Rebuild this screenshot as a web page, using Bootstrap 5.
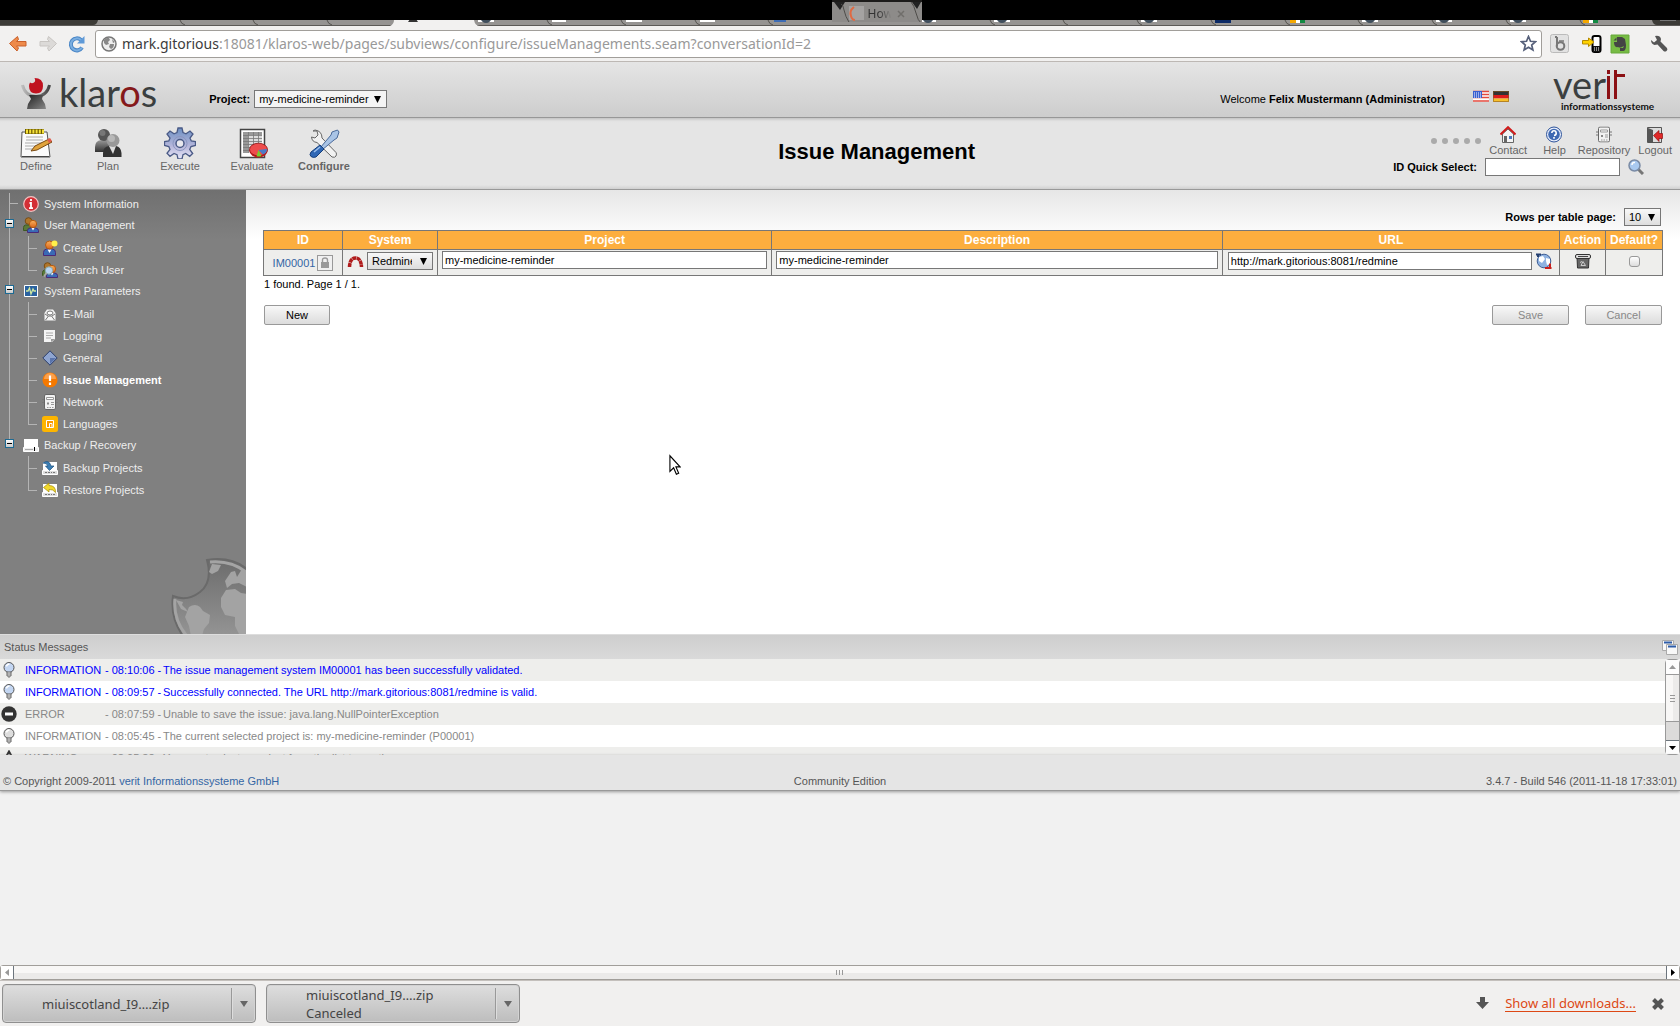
<!DOCTYPE html>
<html lang="en">
<head>
<meta charset="utf-8">
<meta name="viewport" content="width=device-width, initial-scale=1">
<title>Issue Management - Klaros</title>
<link href="https://cdn.jsdelivr.net/npm/bootstrap@5.3.0/dist/css/bootstrap.min.css" rel="stylesheet">
<script src="https://cdn.jsdelivr.net/npm/bootstrap@5.3.0/dist/js/bootstrap.bundle.min.js"></script>
<style>
body{font-family:"Liberation Sans",Arial,sans-serif;font-size:11px;line-height:14px;color:#000;background:#f1f1f1;min-height:100vh;overflow:hidden}
svg{display:block;flex:none}
a{text-decoration:none;color:#3465a4}
.ui-font{font-family:"Noto Sans","Open Sans",sans-serif}
/* browser chrome */
.tabstrip{height:26px;background:#8f8d8b}
.tabstrip>svg{width:100%;height:26px}
.drag-tab{position:absolute;left:49.5%;top:0;width:90px;height:22px}
.drag-tab svg{width:90px;height:22px}
.drag-label{position:absolute;left:36px;top:6px;font-size:12px;line-height:16px;color:#333;width:26px;-webkit-mask-image:linear-gradient(90deg,#000 40%,transparent 90%)}
.navrow{height:36px;background:#f2f1f0;border-bottom:1px solid #bdb8b4;padding-right:12px}
.nav-ico{width:87px;padding-left:8px;gap:10px}
.icon-btn{border:0;background:none;padding:0;display:block}
.omni{height:28px;background:#fff;border:1px solid #a19e9a;border-radius:3px;margin-left:8px;padding:0 4px 0 5px}
.omni-text{font-size:14px;line-height:20px;color:#999;margin-left:5px}
.omni-text b{font-weight:400;color:#3c3c3c}
/* header */
.brandbar{height:56px;background:linear-gradient(#e5e5e5,#cdcdcd);border-bottom:1px solid #979797}
.brand-link{margin-left:21px}
.logo-word{font-family:Lato,sans-serif;font-size:38px;line-height:40px;color:#3b3f40;margin:10px 0 0 8px}
.logo-word span{color:#85191b}
.proj-pick{margin-left:52px;gap:4px}
.welcome{margin-top:30px}
.flags{gap:4px;margin:27px 44px 0 28px}
.verit{color:#3b3f40;width:127px;padding-top:5px}
.verit-name{font-family:Lato,sans-serif;font-size:38px;line-height:34px}
.verit-name svg{margin-top:3px}
.verit-sub{font-family:Lato,sans-serif;font-size:10px;line-height:10px;color:#111;font-weight:700;margin-left:8px}
.menubar{height:72px;background:linear-gradient(#c4c4c4,#e2e2e2 3px,#e5e5e5 5px,#e5e5e5 67px,#d0d0d0);border-bottom:1px solid #999;box-shadow:0 1px #d8d8d8}
.main-menu{padding-top:9px}
.menu-link{width:72px;color:#666;text-align:center}
.page-title{font-size:22px;line-height:26px;font-weight:700;margin:0;padding-top:21px}
.side-cell{flex:1 1 0}
.mini-link{color:#666;line-height:14px;text-align:center}
.dotrow{gap:5px;padding-top:12px}
.dotrow i{width:6px;height:6px;border-radius:50%;background:#aaa}
.quick-row{margin-right:20px;padding-top:1px}
.quick-box{width:135px}
.sel{appearance:none;border:1px solid #777;color:#000;font-size:11px;line-height:14px;height:18px;padding:0 4px;border-radius:0;background:#f4f4f4 url("data:image/svg+xml,%3Csvg xmlns='http://www.w3.org/2000/svg' width='8' height='8'%3E%3Cpath d='M0 0h8L4 8z'/%3E%3C/svg%3E") no-repeat right 5px center/7px 7px}
.sel-grad{background-image:url("data:image/svg+xml,%3Csvg xmlns='http://www.w3.org/2000/svg' width='8' height='8'%3E%3Cpath d='M0 0h8L4 8z'/%3E%3C/svg%3E"),linear-gradient(#f8f8f8,#ddd);background-size:7px 7px,auto;background-position:right 5px center,0 0;background-repeat:no-repeat,repeat}
.sel-project{width:133px}
.sel-system{width:66px;padding-right:20px}
.sel-rows{width:37px;margin-right:2px}
.txt{border:1px solid #777;background:#fff;height:18px;padding:0 2px;font-size:11px;line-height:14px;min-width:0;color:#000;border-radius:0}
/* sidebar */
.sidebar{width:246px;background:linear-gradient(#707070,#808080 50px);overflow:hidden;padding-top:3px}
.tree-top{height:21px;padding-left:23px}
.tree-top a{margin-left:5px}
.tree a{color:#eee}
.tree-kids{padding-top:2px;margin-bottom:-1px}
.tree-kid{height:22px;padding-left:42px;position:relative}
.tree-kid a{margin-left:5px}
.tree-kid::before{content:"";position:absolute;left:28px;top:-1px;width:9px;height:13px;border-left:1px solid #b4b4b4;border-bottom:1px solid #b4b4b4}
.tree-kid:not(:last-child)::after{content:"";position:absolute;left:28px;top:11px;height:11px;border-left:1px solid #b4b4b4}
.trunk{position:absolute;left:9px;top:0;height:246px;border-left:1px solid #b4b4b4}
.stub::before{content:"";position:absolute;left:9px;top:10px;width:9px;border-top:1px solid #b4b4b4}
.toggler{position:absolute;left:5px;top:5px;width:9px;height:9px;padding:0;border:1px solid #1d6a93;background:linear-gradient(#fff,#c8c8c8)}
.toggler::after{content:"";position:absolute;left:1px;top:3px;width:5px;height:1px;background:#000}
.globe{position:absolute;right:0;bottom:0}
.workarea{min-height:444px}
.content-pane{background:linear-gradient(#e6e6e6,#fff 50px);padding:18px 17px 0}
/* table */
.grid-table{table-layout:fixed;width:100%;border-collapse:collapse;margin-top:4px}
.grid-table th{background:#fcae3e;color:#fff;font-size:12px;line-height:14px;height:19px;text-align:center;padding:0;border:1px solid #777}
.grid-table td{background:#eeeeec;border:1px solid #777;height:26px;padding:1px 4px 0;vertical-align:top}
.grid-table .cell-id{padding-top:5px}
.cell-id>div{gap:2px}
.grid-table .cell-low{padding-top:2px}
.grid-table .cell-act{padding-top:3px}
.grid-table .cell-tick{padding-top:6px}
.url-wrap{padding:0 3px 0 1px;gap:4px}
.lockbox{width:16px;height:16px;border:1px solid #999;background:#f0f0f0;padding:1px 3px}
.tick{appearance:none;width:11px;height:11px;border:1px solid #999;border-radius:3px;background:linear-gradient(#fff,#ddd);margin:0}
.found{padding:1px 1px 0;height:29px}
.btn-row{padding:0 1px}
.push{border:1px solid #999;border-radius:2px;background:linear-gradient(#f8f8f8,#dcdcdc);height:20px;line-height:16px;font-size:11px;padding:0;width:77px;color:#000}
.push:disabled{color:#888}
.push-new{width:66px}
/* status */
.status-head{height:25px;background:linear-gradient(#cecece,#dadada);border-top:1px solid #ddd;color:#555;padding:0 2px 0 4px}
.status-box{height:96px;overflow:hidden}
.status-row{height:22px;background:#eeeeec;color:#888;padding-left:1px}
.status-row:nth-child(even){background:#fff}
.status-row.fresh{color:#00f}
.lvl{width:80px;margin-left:8px}
.stamp{width:58px}
.vscroll{width:15px;background:#dcdbda;border:1px solid #999;border-radius:4px}
.vs-btn{height:14px;background:#fdfdfd}
.vs-thumb{height:48px;background:linear-gradient(90deg,#f8f7f6 50%,#ecebea 50%);border:solid #999;border-width:1px 0}
.footer-row{height:36px;background:#e5e5e5;border-bottom:1px solid #999;box-shadow:0 1px 3px #999;color:#555;padding:19px 3px 0;position:relative}
.hscroll{height:15px;border:1px solid #a19e9a;background:linear-gradient(#f8f7f6 50%,#ebeae9 50%);border-radius:3px}
.hs-btn{width:13px;background:#fff}
.dlbar{height:46px;background:#f1f0ef;border-top:1px solid #c4c0bc;padding:3px 16px 0 2px;gap:10px}
.dl-item{width:254px;height:39px;border:1px solid #8f8f8f;border-radius:4px;background:linear-gradient(#dedede,#bdbdbd);color:#444;font-size:13px;line-height:18px;padding:0;box-shadow:inset 0 0 0 1px #d2d2d2}
.dl-name{padding-left:39px}
.dl-arrow{width:24px;height:31px;border-left:1px solid #999;box-shadow:inset 1px 0 #ddd}
.dl-tools{height:39px}
.dl-all{font-size:13px;color:#dd4814;border-bottom:1px solid #dd4814;line-height:16px}
.pointer{position:absolute;left:669px;top:454px}
</style>
</head>
<body class="d-flex flex-column position-relative">

<svg width="0" height="0" class="position-absolute" aria-hidden="true">
<defs>
<linearGradient id="gGlobe" x1="0" y1="0" x2="0" y2="1"><stop offset="0" stop-color="#6c6c6c"/><stop offset="1" stop-color="#949494"/></linearGradient>
<linearGradient id="gBlue" x1="0" y1="0" x2="0" y2="1"><stop offset="0" stop-color="#6c8fc2"/><stop offset=".6" stop-color="#b8b8dc"/><stop offset="1" stop-color="#e8e8f8"/></linearGradient>
<linearGradient id="gDark" x1="0" y1="0" x2="0" y2="1"><stop offset="0" stop-color="#999"/><stop offset="1" stop-color="#333"/></linearGradient>
<linearGradient id="gOrange" x1="0" y1="0" x2="0" y2="1"><stop offset="0" stop-color="#f9b15c"/><stop offset="1" stop-color="#d9641c"/></linearGradient>
<linearGradient id="gBody" x1="0" y1="0" x2="1" y2="1"><stop offset="0" stop-color="#222"/><stop offset="1" stop-color="#888"/></linearGradient>
<linearGradient id="gArm" x1="0" y1="0" x2="1" y2="0"><stop offset="0" stop-color="#bbb"/><stop offset="1" stop-color="#444"/></linearGradient>
<symbol id="bulb" viewBox="0 0 16 16"><circle cx="8" cy="5.500" r="5" fill="currentColor" stroke="#555"/><path d="M5.500 4.500Q5.800 2.300 8.500 2" stroke="#fff" stroke-width="1.500" fill="none"/><path d="M6 10h4v4H6z" fill="#eee" stroke="#666"/><path d="M6 12h4M7 15h2" stroke="#777"/></symbol>
<symbol id="person" viewBox="0 0 16 16"><path d="M1.500 15.500v-3q0-3 3-3.500h6q3 .500 3 3.500v3z" fill="#3a6ab5" stroke="#4b2a78"/><path d="M5.500 9.500L7.500 13l2-3.500z" fill="#fff"/><circle cx="7.500" cy="5" r="4" fill="url(#gOrange)" stroke="#b35a10"/></symbol>
<symbol id="people" viewBox="0 0 16 16"><path d="M.5 13.500v-3q0-2 2-2.500h5v5.500z" fill="#5b7a3a" stroke="#3e5a22"/><circle cx="5.500" cy="4" r="3.300" fill="#b0762c" stroke="#7a4c12"/><path d="M4.500 15.500v-2q0-2 2.500-2.500h5.500q3 .500 3 2.500v2z" fill="#3a6ab5" stroke="#4b2a78"/><path d="M8.500 11L10 13.500l1.500-2.500z" fill="#fff"/><circle cx="10" cy="7" r="3.700" fill="url(#gOrange)" stroke="#b35a10"/></symbol>
<symbol id="disk" viewBox="0 0 16 16"><path d="M1 2h14v8H1z" fill="#fff"/><path d="M.5 10.500h15v4H.5z" fill="#ddd" stroke="#fff"/><path d="M3 12.500h2m1 0h2m1 0h1m1 0h2" stroke="#777"/></symbol>
<symbol id="rack" viewBox="0 0 16 16"><path d="M0 5.500h2M14 5.500h2M0 8.500h2M14 8.500h2" stroke="#777"/><rect x="2.500" y=".5" width="11" height="15" rx="1.500" fill="#f2f2f2" stroke="#666"/><path d="M4.500 3.500h7v2h-7z" fill="#fff" stroke="#999"/><path d="M5 8.500h2v2H5z" fill="#888"/><path d="M9 8.500h3M9 10.500h3M5 13.500h1.500M7.500 13.500H9M10 13.500h1.500" fill="none" stroke="#999"/></symbol>
<symbol id="fav" viewBox="0 0 16 5"><path d="M0 0h16v4H0z" fill="#fff"/><path d="M2 0h12q-2 5-6 5T2 0z" fill="#3f4e5c"/></symbol>
</defs>
</svg>

<!-- tab strip -->
<div class="tabstrip position-relative">
<svg viewBox="0 0 1680 26" preserveAspectRatio="none">
<path d="M0 20h1680v6H0z" fill="#969492"/>
<path d="M0 20h98q-1 5-5 5H0z" fill="#3c3b37"/>
<path d="M0 25.500h1680" stroke="#5c5a57"/>
<path d="M390 26q4-2 4-6h80q1 6 6 6z" fill="#f2f1f0"/>
<path d="M180 20q1 4 5 5M253 20q1 4 5 5M327 20q1 4 5 5M547 20q1 4 5 5M621 20q1 4 5 5M695 20q1 4 5 5M768 20q1 4 5 5M990 20q1 4 5 5M1063 20q1 4 5 5M1137 20q1 4 5 5M1211 20q1 4 5 5M1285 20q1 4 5 5M1358 20q1 4 5 5M1432 20q1 4 5 5M1506 20q1 4 5 5M1580 20q1 4 5 5" stroke="#55534f" fill="none"/>
<path d="M1652 20h28v5h-23q-4 0-5-5z" fill="#3c3b37"/><path d="M1660 20.500h16" stroke="#777"/>
<path d="M408 22h10l-2-3h-6z" fill="#333"/>
<use href="#fav" x="478" y="18" width="16" height="5"/><path d="M552 19h14v3h-14zM626 19h16v3h-16zM700 19h15v3h-15z" fill="#fff"/><path d="M774 19h12v3h-12z" fill="#3d6cb5"/>
<use href="#fav" x="920" y="18" width="16" height="5"/><use href="#fav" x="994" y="18" width="16" height="5"/><use href="#fav" x="1141" y="18" width="16" height="5"/>
<path d="M1215 19h16v4h-16z" fill="#0c2a66"/>
<path d="M1290 19h6v4h-6zM1583 19h6v4h-6z" fill="#f5a800"/><path d="M1296 19h4v4h-4zM1589 19h4v4h-4z" fill="#fff"/><path d="M1300 19h5v4h-5zM1593 19h5v4h-5z" fill="#118a43"/>
<use href="#fav" x="1362" y="18" width="16" height="5"/><use href="#fav" x="1436" y="18" width="16" height="5"/><use href="#fav" x="1510" y="18" width="16" height="5"/>
<path d="M0 0h1680v20H0z" fill="#000"/>
</svg>
<div class="drag-tab">
<svg viewBox="0 0 90 22"><path d="M0 2h90v20H0z" fill="#8d8b89"/><path d="M0 0h90v2H0z" fill="#1c1b1a"/><path d="M2 2h11l-5 8z M80 2h9l-4 7z" fill="#222"/><path d="M9 4q2 0 3 6t6 14M79 2q3 3 5 11t5 10" stroke="#4f4d4a" fill="none"/><path d="M17 6h15v14H17z" fill="#a5a3a2"/><path d="M22 7q-5 4-3 9 1 4 4 4" fill="none" stroke="#e06a43" stroke-width="2"/><path d="M66 11l6 6M72 11l-6 6" stroke="#706e6b" stroke-width="1.500"/></svg>
<span class="drag-label ui-font">How</span>
</div>
</div>

<!-- address row -->
<div class="navrow d-flex align-items-center">
<div class="nav-ico d-flex align-items-center flex-shrink-0">
<button class="icon-btn" aria-label="Back"><svg width="20" height="18" viewBox="0 0 20 18"><path d="M1.500 8.500l8-7 1 3-2 2H18v4.500H8.500l2 2-1.500 3z" fill="#ee8a4a" stroke="#c9602a" stroke-linejoin="round"/></svg></button>
<button class="icon-btn" aria-label="Forward"><svg width="20" height="18" viewBox="0 0 20 18"><path d="M18.500 8.500l-8-7-1 3 2 2H2v4.500h9.500l-2 2 1.500 3z" fill="#dcdad8" stroke="#c8c5c2" stroke-linejoin="round"/></svg></button>
<button class="icon-btn" aria-label="Reload"><svg width="18" height="18" viewBox="0 0 18 18"><path d="M14 12.500A6 6 0 1 1 13 5" fill="none" stroke="#4a86c6" stroke-width="4"/><path d="M14 12.500A6 6 0 1 1 13 5" fill="none" stroke="#7aaee0" stroke-width="2"/><path d="M16.500 1v7.500H9z" fill="#5f9ad8"/></svg></button>
</div>
<div class="omni d-flex align-items-center flex-grow-1">
<svg width="16" height="16" viewBox="0 0 16 16"><circle cx="8" cy="8" r="7" fill="#eee" stroke="#777" stroke-width="1.500"/><path d="M3 4q3-3 5-2l1 2-2 2 1 2-3 1-2-2zM9 8l4 0q0 4-3 5l-2-2zM11 3l3 3-2 1z" fill="#888"/></svg>
<div class="omni-text ui-font flex-grow-1"><b>mark.gitorious</b>:18081/klaros-web/pages/subviews/configure/issueManagements.seam?conversationId=2</div>
<button class="icon-btn" aria-label="Bookmark"><svg width="17" height="17" viewBox="0 0 17 17"><path d="M8.500 1.500l2 4.800 5 .4-3.800 3.300 1.200 5-4.400-2.700L4.100 15l1.200-5L1.500 6.700l5-.4z" fill="#fff" stroke="#56607a" stroke-width="1.700"/></svg></button>
</div>
<div class="d-flex align-items-center ms-1 flex-shrink-0">
<svg class="ms-1 me-2" width="20" height="20" viewBox="0 0 20 20"><rect x=".5" y=".5" width="18" height="18" rx="2" fill="#e2e2e2" stroke="#bbb"/><path d="M7 3v9.500M5 3h2" stroke="#777" stroke-width="2" fill="none"/><circle cx="10.500" cy="12" r="3.800" fill="none" stroke="#777" stroke-width="2"/><path d="M9 7h5" stroke="#777" stroke-width="1.500"/></svg>
<svg class="ms-1" width="20" height="20" viewBox="0 0 20 20"><rect x="10.500" y="2" width="8" height="16" rx="2" fill="#fff" stroke="#000" stroke-width="2"/><path d="M11 12h7v6h-7z" fill="#111"/><path d="M12 14h1m1 0h1m1 0h1M12 16h1m1 0h1m1 0h1" stroke="#fff"/><path d="M.5 6.500h6V4l5.500 4-5.500 4.500V10h-6z" fill="#ffd200" stroke="#b58a00"/></svg>
<svg class="ms-2 me-1" width="20" height="20" viewBox="0 0 20 20"><path d="M1 1h18v18H1z" fill="#77bb44" stroke="#67a83a"/><path d="M7 3h5l3 2 1 6q0 6-3 6h-3v-3h3l1-2-2 1q-2 1-4 0-4 1-4-5l3 0z" fill="#444"/><path d="M3.500 6.500l3-3v3z" fill="#444"/></svg>
<svg class="ms-3" width="18" height="18" viewBox="0 0 18 18"><path d="M5 1q5-1 6 3l-.5 2.500L17 13q1 2-.500 3T13.500 16L7.500 9.500 4.500 10Q1 9 1 5l3 2.500L7 5z" fill="#555"/></svg>
</div>
</div>

<!-- brand bar -->
<header class="brandbar d-flex align-items-start">
<a href="#" class="brand-link d-flex align-items-start">
<svg class="mt-3" width="30" height="32" viewBox="0 0 30 32"><path d="M13.500 0Q22 0 22 8q0 7.500-7 7.500T8 8q0-2 1-3.500 2 1.500 4 0T13.500 0z" fill="#c0121f"/><path d="M1.500 7Q4 18 15 18.500 26 18 28.500 7" fill="none" stroke="url(#gArm)" stroke-width="3"/><path d="M8 17h14l-1 4 3 5 1 5H6l1-5 3-5z" fill="url(#gBody)"/></svg>
<span class="logo-word">klar<span>o</span>s</span>
</a>
<div class="proj-pick d-flex align-items-center mt-4 pt-1">
<label for="projectSel" class="fw-bold">Project:</label>
<select id="projectSel" class="sel sel-project"><option>my-medicine-reminder</option></select>
</div>
<div class="d-flex align-items-start ms-auto">
<div class="welcome">Welcome <b>Felix Mustermann (Administrator)</b></div>
<div class="flags d-flex">
<svg width="16" height="16" viewBox="0 0 16 16"><path d="M0 2h16v11H0z" fill="#fff"/><path d="M0 2.500h16M0 5.500h16M0 8.500h16M0 12h16" stroke="#e2483d" stroke-width="1.500"/><path d="M0 2h9v7H0z" fill="#3a5fd0"/><path d="M1 4h7M1 6h7M1 8h7" stroke="#fff" stroke-dasharray="1"/></svg>
<svg width="16" height="16" viewBox="0 0 16 16"><path d="M0 2h16v4H0z" fill="#333"/><path d="M0 6h16v3.500H0z" fill="#dd1c1c"/><path d="M0 9.500h16V13H0z" fill="#f7c02c"/><path d="M.5 2.500h15v10H.5z" fill="none" stroke="#8a5a20" opacity=".6"/></svg>
</div>
<div class="verit">
<div class="verit-name d-flex">ver<svg width="20" height="30" viewBox="0 0 20 30"><path d="M1 0h3v4H1zM1 6h3v23H1zM8 0h3v4h8v3h-8v22H8z" fill="#8c1014"/></svg></div>
<div class="verit-sub">informationssysteme</div>
</div>
</div>
</header>

<!-- menu bar -->
<div class="menubar d-flex">
<nav class="main-menu d-flex">
<a href="#" class="menu-link d-flex flex-column align-items-center"><svg width="32" height="32" viewBox="0 0 32 32"><path d="M2 5h25l3 25H1z" fill="#fafafa" stroke="#555"/><path d="M2 29.500h27" stroke="#444"/><path d="M6 10h17M6 13h17M5 16h17M5 19h13M5 22h12" stroke="#aaa"/><path d="M5 2h19v5H5z" fill="#6d5a00"/><path d="M6 4.500h18" stroke="#f6e23a" stroke-width="4" stroke-dasharray="2 1.200"/><path d="M11 24l4-5 14-7 3 3-15 8z" fill="#e0a33c" stroke="#7a4a12"/><path d="M27 12.500l3-1.500 2 3-3 2z" fill="#e05a4a"/></svg>Define</a>
<a href="#" class="menu-link d-flex flex-column align-items-center"><svg width="32" height="32" viewBox="0 0 32 32"><path d="M3 25v-5q0-6 6-7h6q3 1 4 4v8z" fill="url(#gDark)"/><circle cx="12" cy="8" r="6" fill="#555"/><circle cx="10.500" cy="6" r="3" fill="#777"/><path d="M11 30v-4q0-6 6-7h7q5 1 5.500 7v4z" fill="#333"/><path d="M17 19l4 8 3-8z" fill="#ddd"/><circle cx="21" cy="13.500" r="6.500" fill="#999"/><circle cx="19.500" cy="11.500" r="3.500" fill="#b8b8b8"/></svg>Plan</a>
<a href="#" class="menu-link d-flex flex-column align-items-center"><svg width="32" height="32" viewBox="0 0 32 32"><path d="M14 1h4l1 4.500 3 1.300L26 4l3 3-3 4 1.300 3 4.200.500v4L27 19.500l-1.300 3 3 4-3 2.800-4-2.800-2.700 1.200L18 32h-4l-1-4.300-3-1.200-4 2.800-3-3 3-3.800L4.800 19.500.500 18.500v-4L4.800 14 6 11 3 7l3-3 4 2.800L13 5.500z" fill="url(#gBlue)" stroke="#4a5a86" stroke-width="1.300"/><circle cx="16" cy="16.500" r="7" fill="none" stroke="#8c96c0"/><circle cx="16" cy="16.500" r="4" fill="#e8e8ee" stroke="#4a5a86" stroke-width="1.500"/></svg>Execute</a>
<a href="#" class="menu-link d-flex flex-column align-items-center"><svg width="32" height="32" viewBox="0 0 32 32"><path d="M4.500 2.500h24v28h-24z" fill="#fff" stroke="#444" stroke-width="1.500"/><path d="M7 5h19v21H7z" fill="#ddd"/><path d="M7 5h19v3H7zM7 8h5v18H7z" fill="#999"/><path d="M7 8.500h19M7 11.500h19M7 14.500h19M7 17.500h19M7 20.500h19M7 23.500h19M12.500 5v21M17.500 5v21M22.500 5v21" stroke="#777" stroke-width=".8"/><ellipse cx="22.500" cy="24" rx="9" ry="6.500" fill="#c61818"/><ellipse cx="22.500" cy="22.500" rx="9" ry="6.300" fill="#ee4c4c" stroke="#8c1010" stroke-width=".8"/><path d="M22.500 23l8.500-1q0 4-4 5.500z" fill="#4a7ac8"/><path d="M22.500 23l3 6q-3 1-5 0z" fill="#72d12c"/></svg>Evaluate</a>
<a href="#" class="menu-link d-flex flex-column align-items-center fw-bold"><svg width="32" height="32" viewBox="0 0 32 32"><path d="M5 4l4 0 1 4-3 3-3.500-1Q4 15 9 15.500L24 30q3 1 4-1t0-3.500L14 11Q14 4 7 3z" fill="#f2f2f2" stroke="#666"/><path d="M29.500 3l1.500 2-2 6-3 2-12 10-2-2L23 8l1-3z" fill="#a9c4e6" stroke="#4a6a9a"/><path d="M12 18l4 4-8 8q-3 1-5-.500T3 25z" fill="#2f67b5" stroke="#163f7c"/><path d="M6 25l6-5" stroke="#9cc0ee" stroke-width="1.500"/></svg>Configure</a>
</nav>
<h1 class="page-title flex-grow-1 text-center">Issue Management</h1>
<div class="d-flex flex-column align-items-end pt-2">
<div class="d-flex">
<div class="dotrow d-flex me-2"><i></i><i></i><i></i><i></i><i></i></div>
<div class="d-flex gap-2 me-2">
<a href="#" class="mini-link d-flex flex-column align-items-center"><svg width="16" height="17" viewBox="0 0 16 17"><path d="M2.500 8v8.500h11V8L8 3z" fill="#f4f4f4" stroke="#666"/><path d="M4 10h3v6H4z" fill="#666"/><path d="M9 10h3v3H9z" fill="#4a78c0"/><path d="M.5 8.500L8 1.200l7.500 7.300" fill="none" stroke="#d01a1a" stroke-width="2"/></svg>Contact</a>
<a href="#" class="mini-link d-flex flex-column align-items-center ms-2 me-1"><svg width="16" height="17" viewBox="0 0 16 17"><circle cx="8" cy="8.500" r="7.500" fill="#e8eefc" stroke="#2d539a"/><circle cx="8" cy="8.500" r="5.800" fill="#3f69b2"/><path d="M5.800 7Q6 4.800 8 4.800T10.200 7 8 9.500M8 11v1.700" fill="none" stroke="#fff" stroke-width="1.600"/></svg>Help</a>
<a href="#" class="mini-link d-flex flex-column align-items-center"><svg width="16" height="17" viewBox="0 0 16 16"><use href="#rack"/></svg>Repository</a>
<a href="#" class="mini-link d-flex flex-column align-items-center"><svg width="16" height="17" viewBox="0 0 16 17"><path d="M.5 1.500h14v15H.500z" fill="#ddd" stroke="#555"/><path d="M1 2l5 2v12.500H1z" fill="#555"/><path d="M6.500 9.500L12 4.500v3h3.500v5H12v3z" fill="#e02828" stroke="#8c1010" stroke-width=".7"/></svg>Logout</a>
</div>
</div>
<div class="quick-row d-flex align-items-center">
<label for="quick" class="fw-bold me-2">ID Quick Select:</label>
<input id="quick" type="text" class="txt quick-box">
<button class="icon-btn ms-2 me-3" aria-label="Search"><svg width="16" height="16" viewBox="0 0 16 16"><path d="M10 10l5 5" stroke="#777" stroke-width="3"/><circle cx="6.500" cy="6.500" r="5.500" fill="#a9c9f0" stroke="#7a8ba5" stroke-width="1.500"/><path d="M4 6q0-3 3-2.500" stroke="#fff" stroke-width="1.500" fill="none"/></svg></button>
</div>
</div>
</div>

<!-- work area -->
<div class="workarea d-flex">
<aside class="sidebar position-relative flex-shrink-0">
<div class="tree position-relative">
<div class="trunk"></div>
<div class="tree-top stub d-flex align-items-center position-relative"><svg width="16" height="16" viewBox="0 0 16 16"><circle cx="8" cy="8" r="7.300" fill="#d32f36" stroke="#f3c2c2" stroke-width="1.200"/><path d="M8 3v2M6.500 7H8v5M6 12.200h4" stroke="#fff" stroke-width="1.800" fill="none"/></svg><a href="#">System Information</a></div>
<div class="tree-top d-flex align-items-center position-relative"><button class="toggler" aria-label="Collapse User Management"></button><svg width="16" height="16"><use href="#people"/></svg><a href="#">User Management</a></div>
<div class="tree-kids">
<div class="tree-kid d-flex align-items-center"><svg width="16" height="16" viewBox="0 0 16 16"><use href="#person"/><circle cx="12.500" cy="3.500" r="3" fill="#fff04a"/></svg><a href="#">Create User</a></div>
<div class="tree-kid d-flex align-items-center"><svg width="16" height="16" viewBox="0 0 16 16"><use href="#people"/><circle cx="7" cy="8.500" r="3.700" fill="#b8d4f2" stroke="#8aa"/><path d="M4.500 11L2 14.500" stroke="#aaa" stroke-width="2"/></svg><a href="#">Search User</a></div>
</div>
<div class="tree-top d-flex align-items-center position-relative"><button class="toggler" aria-label="Collapse System Parameters"></button><svg width="16" height="16" viewBox="0 0 16 16"><path d="M1.500 2.500h13v11h-13z" fill="#2a62a0" stroke="#fff"/><path d="M3 8h2l1.500-3L8 11l2-5 1 2h2" fill="none" stroke="#cfe8a0" stroke-width="1.300"/></svg><a href="#">System Parameters</a></div>
<div class="tree-kids">
<div class="tree-kid d-flex align-items-center"><svg width="16" height="16" viewBox="0 0 16 16"><path d="M2.500 7L5 3.500h6L13.500 7v7.500h-11z" fill="#f6f6f6"/><ellipse cx="8" cy="7" rx="3" ry="2" fill="#fff" stroke="#777"/><path d="M3.500 14l3-4h3l3 4M3 8l3 2M13 8l-3 2" fill="none" stroke="#777"/></svg><a href="#">E-Mail</a></div>
<div class="tree-kid d-flex align-items-center"><svg width="16" height="16" viewBox="0 0 16 16"><path d="M2 2h11v9l-3 3H2z" fill="#f4f4f4"/><path d="M4 5h7M4 7.500h7M4 10h5" stroke="#aaa"/><path d="M9 14v-3h4z" fill="#999"/></svg><a href="#">Logging</a></div>
<div class="tree-kid d-flex align-items-center"><svg width="16" height="16" viewBox="0 0 16 16"><path d="M8 .8L15.200 8 8 15.200.8 8z" fill="#8fa5d0" stroke="#2b3e6b"/><path d="M8 2v12M8 8h6L8 14z" fill="#5a74ac"/></svg><a href="#">General</a></div>
<div class="tree-kid d-flex align-items-center"><svg width="16" height="16" viewBox="0 0 16 16"><circle cx="8" cy="8" r="7.500" fill="#f57900"/><path d="M2 7a6 6 0 0 1 12 0z" fill="#fba04c"/><path d="M8 3.500v5.500M8 10.500V13" stroke="#fff" stroke-width="2.200"/></svg><a href="#" class="fw-bold text-white">Issue Management</a></div>
<div class="tree-kid d-flex align-items-center"><svg width="16" height="16"><use href="#rack"/></svg><a href="#">Network</a></div>
<div class="tree-kid d-flex align-items-center"><svg width="16" height="16" viewBox="0 0 16 16"><rect width="16" height="16" rx="2.500" fill="#fdb500"/><path d="M4.500 4.500h7v7h-7z" fill="#fb9a00" stroke="#fff"/><path d="M7.500 11V7.500H10V11" stroke="#fff" fill="none"/></svg><a href="#">Languages</a></div>
</div>
<div class="tree-top d-flex align-items-center position-relative"><button class="toggler" aria-label="Collapse Backup / Recovery"></button><svg width="16" height="16" viewBox="0 0 16 16"><path d="M1 2h14v8H1z" fill="#fff"/><path d="M.5 10.500h15v4H.5z" fill="#eee" stroke="#fff"/><path d="M2 12.500h8" stroke="#aaa"/><path d="M11.500 10v4" stroke="#000"/></svg><a href="#">Backup / Recovery</a></div>
<div class="tree-kids">
<div class="tree-kid d-flex align-items-center"><svg width="16" height="16" viewBox="0 0 16 16"><use href="#disk"/><path d="M1 3q6-4 8 3h3l-4.500 4.500L3.500 6H6Q5 3 1 3z" fill="#3b7fb5" stroke="#1d4f7c" stroke-width=".7"/></svg><a href="#">Backup Projects</a></div>
<div class="tree-kid d-flex align-items-center"><svg width="16" height="16" viewBox="0 0 16 16"><use href="#disk"/><path d="M1.500 5.500L7 1v2.500q7 0 6.500 7Q11 7 7 7.500V10z" fill="#f2d92c" stroke="#a38a00" stroke-width=".7"/></svg><a href="#">Restore Projects</a></div>
</div>
</div>
<svg class="globe" width="75" height="76" viewBox="0 0 75 76"><path d="M36 2q24-4 40 9v67H12Q-1 60 2 38q14 6 27-4T36 2z" fill="url(#gGlobe)" stroke="#6a6a6a" stroke-width="2"/><path d="M39 4q22-2 37 11M4 41q-2 20 11 36" fill="none" stroke="#a4a4a4" stroke-width="3"/><path d="M18 49q6-4 11 0l3 4 7 4-1 8-5 6-2 7H20l-2-10-4-9 2-5zM5 42l7 2-1 3 4 4 2 3-7-3zM41 6l9 1-3 6-6 3-3-2zM50 40l5-8 9-1 6 4 6 1v42h-7l-5-10 0-9-10-2-4-8zM54 23l6-9 4-1 2 6 5-8 5 4v14l-8-4-7 1-5 4z" fill="#a3a3a3"/></svg>
</aside>
<main class="content-pane flex-grow-1">
<div class="d-flex justify-content-end align-items-center">
<label for="rowsSel" class="fw-bold me-2">Rows per table page:</label>
<select id="rowsSel" class="sel sel-grad sel-rows"><option>10</option></select>
</div>
<table class="grid-table">
<colgroup><col style="width:79px"><col style="width:95px"><col style="width:23.9%"><col style="width:32.2%"><col><col style="width:46px"><col style="width:57px"></colgroup>
<thead><tr><th>ID</th><th>System</th><th>Project</th><th>Description</th><th>URL</th><th>Action</th><th>Default?</th></tr></thead>
<tbody><tr>
<td class="cell-id"><div class="d-flex align-items-center justify-content-center"><a href="#">IM00001</a><span class="lockbox"><svg width="8" height="12" viewBox="0 0 8 12"><path d="M1.500 6V3q0-2 2.500-2t2.500 2v3" fill="none" stroke="#999" stroke-width="1.400"/><path d="M0 5h8v6H0z" fill="#999"/></svg></span></div></td>
<td class="cell-low"><div class="d-flex align-items-center justify-content-between"><svg width="17" height="16" viewBox="0 0 17 16"><path d="M2.500 14Q3 5 8.500 5t6 9" fill="none" stroke="#b01c1c" stroke-width="3.500" stroke-dasharray="4 .4"/></svg><select class="sel sel-grad sel-system" aria-label="System"><option>Redmine</option></select></div></td>
<td><input class="txt w-100 d-block" type="text" aria-label="Project" value="my-medicine-reminder"></td>
<td><input class="txt w-100 d-block" type="text" aria-label="Description" value="my-medicine-reminder"></td>
<td class="cell-low"><div class="url-wrap d-flex align-items-center"><input class="txt flex-grow-1" type="text" aria-label="URL" value="http://mark.gitorious:8081/redmine"><button class="icon-btn" aria-label="Check URL"><svg width="16" height="16" viewBox="0 0 16 16"><circle cx="8" cy="8" r="6.800" fill="#8fb2e0" stroke="#3f5f96"/><path d="M3 4l4-1 2 3-3 4-3-2zM10 5l4 1v5l-3 1-1-4z" fill="#fff"/><path d="M0 1.500h5M2 1v3" stroke="#243f70" stroke-width="2"/><path d="M9 15h6.500M14 10.500V15" fill="none" stroke="#c8201c" stroke-width="2"/></svg></button></div></td>
<td class="cell-act"><button class="icon-btn mx-auto" aria-label="Delete"><svg width="16" height="16" viewBox="0 0 16 16"><path d="M2 4h12l-.5 11h-11z" fill="#666" stroke="#333"/><rect x=".5" y="1.500" width="15" height="4" rx="1.500" fill="#ddd" stroke="#333"/><path d="M3 3.500h10" stroke="#444"/><path d="M6 12.500l2-4 2.500 4zM5 9.500l2-1" fill="none" stroke="#ccc"/></svg></button></td>
<td class="cell-tick"><input class="tick d-block mx-auto" type="checkbox" aria-label="Default"></td>
</tr></tbody></table>
<div class="found">1 found. Page 1 / 1.</div>
<div class="btn-row d-flex"><button class="push push-new">New</button><button class="push ms-auto" disabled>Save</button><button class="push ms-3" disabled>Cancel</button></div>
</main>
</div>

<!-- status messages -->
<section>
<div class="status-head d-flex justify-content-between align-items-center">Status Messages
<svg width="16" height="16" viewBox="0 0 16 16"><path d="M.5 1.500h11v10H.5z" fill="#f8f8f8" stroke="#aaa"/><path d="M2 3.500h8" stroke="#2d5ca8" stroke-width="2"/><path d="M4.500 5.500h11v10h-11z" fill="#f8f8f8" stroke="#aaa"/><path d="M6 7.500h8" stroke="#2d5ca8" stroke-width="2"/></svg></div>
<div class="status-box d-flex">
<div class="flex-grow-1">
<div class="status-row fresh d-flex align-items-center"><svg width="16" height="16" color="#c3d6f2"><use href="#bulb"/></svg><span class="lvl">INFORMATION</span><span class="stamp">- 08:10:06 -</span><span>The issue management system IM00001 has been successfully validated.</span></div>
<div class="status-row fresh d-flex align-items-center"><svg width="16" height="16" color="#c3d6f2"><use href="#bulb"/></svg><span class="lvl">INFORMATION</span><span class="stamp">- 08:09:57 -</span><span>Successfully connected. The URL http://mark.gitorious:8081/redmine is valid.</span></div>
<div class="status-row d-flex align-items-center"><svg width="16" height="16" viewBox="0 0 16 16"><circle cx="8" cy="8" r="7.700" fill="#333"/><path d="M4 8h8" stroke="#fff" stroke-width="3"/></svg><span class="lvl">ERROR</span><span class="stamp">- 08:07:59 -</span><span>Unable to save the issue: java.lang.NullPointerException</span></div>
<div class="status-row d-flex align-items-center"><svg width="16" height="16" color="#ddd"><use href="#bulb"/></svg><span class="lvl">INFORMATION</span><span class="stamp">- 08:05:45 -</span><span>The current selected project is: my-medicine-reminder (P00001)</span></div>
<div class="status-row d-flex align-items-center"><svg width="16" height="16" viewBox="0 0 16 16"><path d="M8 1.500L15 14H1z" fill="#eee" stroke="#333" stroke-width="2"/></svg><span class="lvl">WARNING</span><span class="stamp">- 08:05:32 -</span><span>You must select a project from the list to continue.</span></div>
</div>
<div class="vscroll d-flex flex-column flex-shrink-0" aria-hidden="true"><div class="vs-btn d-flex align-items-center justify-content-center"><svg width="7" height="4"><path d="M3.500 0L7 4H0z" fill="#999"/></svg></div><div class="vs-thumb d-flex align-items-center justify-content-center"><svg width="5" height="7"><path d="M0 .5h5M0 3.500h5M0 6.500h5" stroke="#999"/></svg></div><div class="flex-grow-1"></div><div class="vs-btn border-top border-secondary d-flex align-items-center justify-content-center"><svg width="7" height="4"><path d="M3.500 4L7 0H0z"/></svg></div></div>
</div>
<footer class="footer-row d-flex"><div class="side-cell">© Copyright 2009-2011 <a href="#">verit Informationssysteme GmbH</a></div><div>Community Edition</div><div class="side-cell text-end">3.4.7 - Build 546 (2011-11-18 17:33:01)</div></footer>
</section>
<div class="flex-grow-1"></div>

<!-- horizontal scrollbar and downloads -->
<div class="hscroll d-flex justify-content-between align-items-stretch" aria-hidden="true"><div class="hs-btn border-end border-secondary d-flex align-items-center justify-content-center"><svg width="4" height="7"><path d="M0 3.500L4 0v7z" fill="#999"/></svg></div><svg class="align-self-center" width="8" height="5"><path d="M.5 0v5M3.500 0v5M6.500 0v5" stroke="#999"/></svg><div class="hs-btn border-start border-secondary d-flex align-items-center justify-content-center"><svg width="4" height="7"><path d="M4 3.500L0 0v7z"/></svg></div></div>
<div class="dlbar ui-font d-flex align-items-start">
<button class="dl-item d-flex align-items-center"><span class="dl-name flex-grow-1 text-start">miuiscotland_I9….zip</span><span class="dl-arrow d-flex align-items-center justify-content-center"><svg width="8" height="6"><path d="M0 0h8L4 6z" fill="#666"/></svg></span></button>
<button class="dl-item d-flex align-items-center"><span class="dl-name flex-grow-1 text-start">miuiscotland_I9….zip<br>Canceled</span><span class="dl-arrow d-flex align-items-center justify-content-center"><svg width="8" height="6"><path d="M0 0h8L4 6z" fill="#666"/></svg></span></button>
<div class="dl-tools d-flex align-items-center ms-auto">
<svg width="13" height="13" viewBox="0 0 13 13"><path d="M4 0h5v5h4l-6.500 7L0 5h4z" fill="#555"/></svg>
<a href="#" class="dl-all mx-3">Show all downloads...</a>
<button class="icon-btn" aria-label="Close"><svg width="12" height="12" viewBox="0 0 12 12"><path d="M1.500 1.500l9 9M10.500 1.500l-9 9" stroke="#555" stroke-width="4"/></svg></button>
</div>
</div>

<svg class="pointer" width="12" height="22" viewBox="0 0 13 22"><path d="M1 1v17l4-4 3 7 2.500-1-3-7H12z" fill="#fff" stroke="#000" stroke-width="1.200"/></svg>
</body>
</html>
